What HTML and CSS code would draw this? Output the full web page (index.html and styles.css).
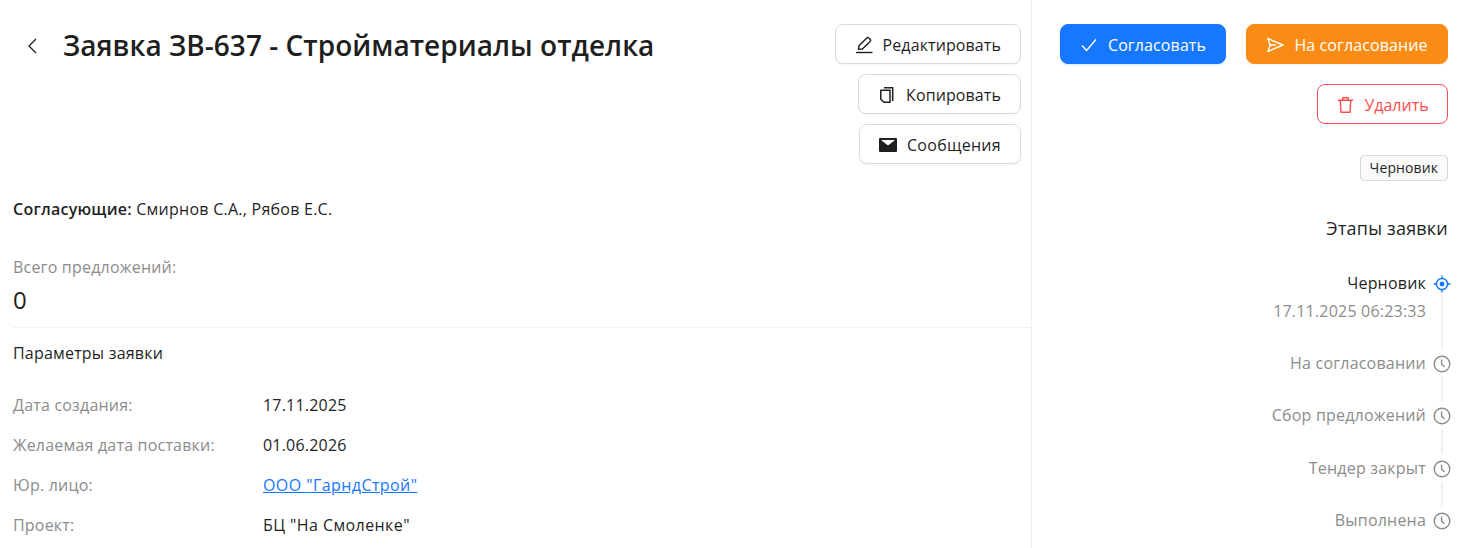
FILE: index.html
```html
<!DOCTYPE html>
<html lang="ru">
<head>
    <meta charset="UTF-8">
    <title>Заявка ЗВ-637</title>
    <link rel="stylesheet" href="styles.css">
</head>
<body>
    <div class="page">
        <div class="main">
            <div class="head">
                <button class="back" aria-label="Назад">
                    <svg width="16" height="16" viewBox="0 0 16 16"><path d="M11 1 L4 8 L11 15" fill="none" stroke="#1f1f1f" stroke-width="1.3"/></svg>
                </button>
                <h1>Заявка ЗВ-637 - Стройматериалы отделка</h1>
                <div class="head-actions">
                    <button class="btn">
                        <svg width="20" height="20" viewBox="0 0 20 20"><path d="M1 17.5 H17.5" stroke="#1f1f1f" stroke-width="1.4" fill="none"/><path d="M3.4 14.4 L4 10.8 L11.8 3 Q12.8 2 13.9 3 L15.2 4.3 Q16.2 5.4 15.2 6.4 L7.4 14 Z" fill="none" stroke="#1f1f1f" stroke-width="1.4" stroke-linejoin="round"/></svg>
                        Редактировать
                    </button>
                    <button class="btn">
                        <svg width="20" height="20" viewBox="0 0 20 20"><path d="M6 2.7 H14.7 V16" fill="none" stroke="#1f1f1f" stroke-width="1.5"/><path d="M2.8 5.2 H12 V17.3 H6 L2.8 14.2 Z" fill="none" stroke="#1f1f1f" stroke-width="1.5" stroke-linejoin="round"/></svg>
                        Копировать
                    </button>
                    <button class="btn btn-wide-text">
                        <svg width="20" height="20" viewBox="0 0 20 20"><rect x="0" y="3" width="18" height="14" rx="1" fill="#1f1f1f"/><path d="M2 5 H16 L9 10.4 Z" fill="#fff"/></svg>
                        Сообщения
                    </button>
                </div>
            </div>

            <p class="approvers"><strong>Согласующие:</strong> Смирнов С.А., Рябов Е.С.</p>

            <div class="stat">
                <div class="stat-label">Всего предложений:</div>
                <div class="stat-value">0</div>
            </div>

            <div class="params">
                <div class="params-title">Параметры заявки</div>
                <div class="param"><span class="param-label">Дата создания:</span><span>17.11.2025</span></div>
                <div class="param"><span class="param-label">Желаемая дата поставки:</span><span>01.06.2026</span></div>
                <div class="param"><span class="param-label">Юр. лицо:</span><a class="param-quoted" href="#">ООО "ГарндСтрой"</a></div>
                <div class="param"><span class="param-label">Проект:</span><span class="param-quoted">БЦ "На Смоленке"</span></div>
            </div>
        </div>

        <div class="side">
            <div class="side-actions">
                <button class="btn btn-primary">
                    <svg width="20" height="20" viewBox="0 0 20 20"><path d="M2 10.5 L6.6 15.5 L16 4.5" fill="none" stroke="#fff" stroke-width="1.4"/></svg>
                    Согласовать
                </button>
                <button class="btn btn-orange">
                    <svg width="20" height="20" viewBox="0 0 20 20"><path d="M1.8 3.5 L17 10 L1.8 16.5 L4.2 10 Z M4.2 10 H10" fill="none" stroke="#fff" stroke-width="1.4" stroke-linejoin="round"/></svg>
                    На согласование
                </button>
                <button class="btn btn-danger">
                    <svg width="20" height="20" viewBox="0 0 20 20"><path d="M2 5.3 H17 M6.8 5.3 V2.7 H12.2 V5.3 M4.2 5.3 L5 17.3 H14 L14.8 5.3" fill="none" stroke="#ff4d4f" stroke-width="1.4" stroke-linejoin="round"/></svg>
                    Удалить
                </button>
            </div>

            <span class="tag">Черновик</span>
            <div class="side-title">Этапы заявки</div>

            <div class="steps">
                <div class="step step-current">
                    <div class="step-text">
                        <div class="step-name">Черновик</div>
                        <div class="step-date">17.11.2025 06:23:33</div>
                    </div>
                    <div class="step-rail">
                        <svg width="18" height="18" viewBox="0 0 18 18"><circle cx="9" cy="9" r="5.6" fill="none" stroke="#1677ff" stroke-width="1.5"/><circle cx="9" cy="9" r="2.4" fill="#1677ff"/><path d="M9 0.5 V3.4 M9 14.6 V17.5 M0.5 9 H3.4 M14.6 9 H17.5" stroke="#1677ff" stroke-width="1.4"/></svg>
                        <div class="step-line"></div>
                    </div>
                </div>
                <div class="step">
                    <div class="step-text"><div class="step-name">На согласовании</div></div>
                    <div class="step-rail">
                        <svg width="18" height="18" viewBox="0 0 18 18"><circle cx="9" cy="9" r="7.8" fill="none" stroke="#8c8c8c" stroke-width="1.4"/><path d="M8.6 4.4 V9.4 L11.6 11.8" fill="none" stroke="#8c8c8c" stroke-width="1.4"/></svg>
                        <div class="step-line"></div>
                    </div>
                </div>
                <div class="step">
                    <div class="step-text"><div class="step-name">Сбор предложений</div></div>
                    <div class="step-rail">
                        <svg width="18" height="18" viewBox="0 0 18 18"><circle cx="9" cy="9" r="7.8" fill="none" stroke="#8c8c8c" stroke-width="1.4"/><path d="M8.6 4.4 V9.4 L11.6 11.8" fill="none" stroke="#8c8c8c" stroke-width="1.4"/></svg>
                        <div class="step-line"></div>
                    </div>
                </div>
                <div class="step">
                    <div class="step-text"><div class="step-name">Тендер закрыт</div></div>
                    <div class="step-rail">
                        <svg width="18" height="18" viewBox="0 0 18 18"><circle cx="9" cy="9" r="7.8" fill="none" stroke="#8c8c8c" stroke-width="1.4"/><path d="M8.6 4.4 V9.4 L11.6 11.8" fill="none" stroke="#8c8c8c" stroke-width="1.4"/></svg>
                        <div class="step-line"></div>
                    </div>
                </div>
                <div class="step">
                    <div class="step-text"><div class="step-name">Выполнена</div></div>
                    <div class="step-rail">
                        <svg width="18" height="18" viewBox="0 0 18 18"><circle cx="9" cy="9" r="7.8" fill="none" stroke="#8c8c8c" stroke-width="1.4"/><path d="M8.6 4.4 V9.4 L11.6 11.8" fill="none" stroke="#8c8c8c" stroke-width="1.4"/></svg>
                    </div>
                </div>
            </div>
        </div>
    </div>
</body>
</html>
```

FILE: styles.css
```css
* {
    margin: 0;
    padding: 0;
    box-sizing: border-box;
}

html, body {
    height: 548px;
    overflow: hidden;
}

body {
    background: #fff;
    color: #1f1f1f;
    font-family: "Open Sans", "Noto Sans", sans-serif;
    font-size: 16px;
    line-height: 24px;
    letter-spacing: 0.2px;
}

.page {
    display: flex;
    height: 548px;
    padding-right: 16px;
}

.main {
    width: 1032px;
    padding: 24px 10px 0 13px;
    border-right: 1px solid #f0f0f0;
}

.head {
    display: flex;
    align-items: flex-start;
}

.back {
    width: 50px;
    height: 44px;
    padding-left: 12px;
    background: none;
    border: none;
    display: flex;
    align-items: center;
}

h1 {
    flex: 1;
    font-size: 28px;
    line-height: 42px;
    font-weight: 600;
    letter-spacing: 0.03px;
}

.head-actions {
    display: flex;
    flex-direction: column;
    align-items: flex-end;
    gap: 10px;
}

.btn {
    display: flex;
    align-items: center;
    justify-content: center;
    gap: 8px;
    height: 40px;
    padding: 2px 19px 0;
    background: #fff;
    color: #1f1f1f;
    border: 1px solid #d9d9d9;
    border-radius: 8px;
    font: inherit;
    letter-spacing: 0.1px;
    box-shadow: 0 2px 0 rgba(0, 0, 0, 0.02);
}

.btn svg {
    flex-shrink: 0;
}

.btn-wide-text {
    letter-spacing: 0.3px;
}

.btn-primary {
    width: 166px;
    background: #1677ff;
    border-color: #1677ff;
    color: #fff;
    box-shadow: 0 2px 0 rgba(5, 145, 255, 0.1);
}

.btn-orange {
    width: 202px;
    background: #fa8c16;
    border-color: #fa8c16;
    color: #fff;
}

.btn-danger {
    width: 131px;
    margin-top: 20px;
    border-color: #ff4d4f;
    color: #ff4d4f;
    letter-spacing: 0;
}

.approvers {
    margin-top: 33px;
    letter-spacing: 0.25px;
}

.approvers strong {
    font-weight: 600;
}

.stat {
    margin-top: 34px;
    padding-bottom: 9px;
    border-bottom: 1px solid #f0f0f0;
    margin-right: -10px;
}

.stat-label {
    color: #8c8c8c;
}

.stat-value {
    margin-top: 3px;
    font-size: 24px;
    line-height: 36px;
}

.params-title {
    margin-top: 13px;
    margin-bottom: 28px;
}

.param {
    display: flex;
    height: 40px;
}

.param-label {
    width: 250px;
    color: #8c8c8c;
}

.param-quoted {
    letter-spacing: 0.42px;
}

.param a {
    color: #1677ff;
}

.side {
    flex: 1;
    padding-top: 24px;
    display: flex;
    flex-direction: column;
    align-items: flex-end;
}

.side-actions {
    display: flex;
    flex-wrap: wrap;
    justify-content: flex-end;
    gap: 0 20px;
}

.tag {
    margin-top: 31px;
    height: 26px;
    padding: 0 9px;
    background: #fafafa;
    border: 1px solid #d9d9d9;
    border-radius: 4px;
    font-size: 14px;
    line-height: 24px;
    letter-spacing: 0.1px;
}

.side-title {
    margin-top: 35px;
    font-size: 18px;
    line-height: 24px;
}

.steps {
    margin-top: 31px;
    margin-right: -3px;
    align-self: stretch;
}

.step {
    display: flex;
    justify-content: flex-end;
    gap: 7px;
    height: 52.4px;
}

.step-current {
    height: 80px;
}

.step-text {
    text-align: right;
    color: #8c8c8c;
}

.step-current .step-name {
    color: #1f1f1f;
}

.step-date {
    margin-top: 4px;
}

.step-rail {
    width: 18px;
    padding-top: 4px;
    display: flex;
    flex-direction: column;
    align-items: center;
}

.step-rail svg {
    flex-shrink: 0;
}

.step-line {
    flex: 1;
    width: 2px;
    margin: 4px 0 2px;
    background: #f0f0f0;
}
```
